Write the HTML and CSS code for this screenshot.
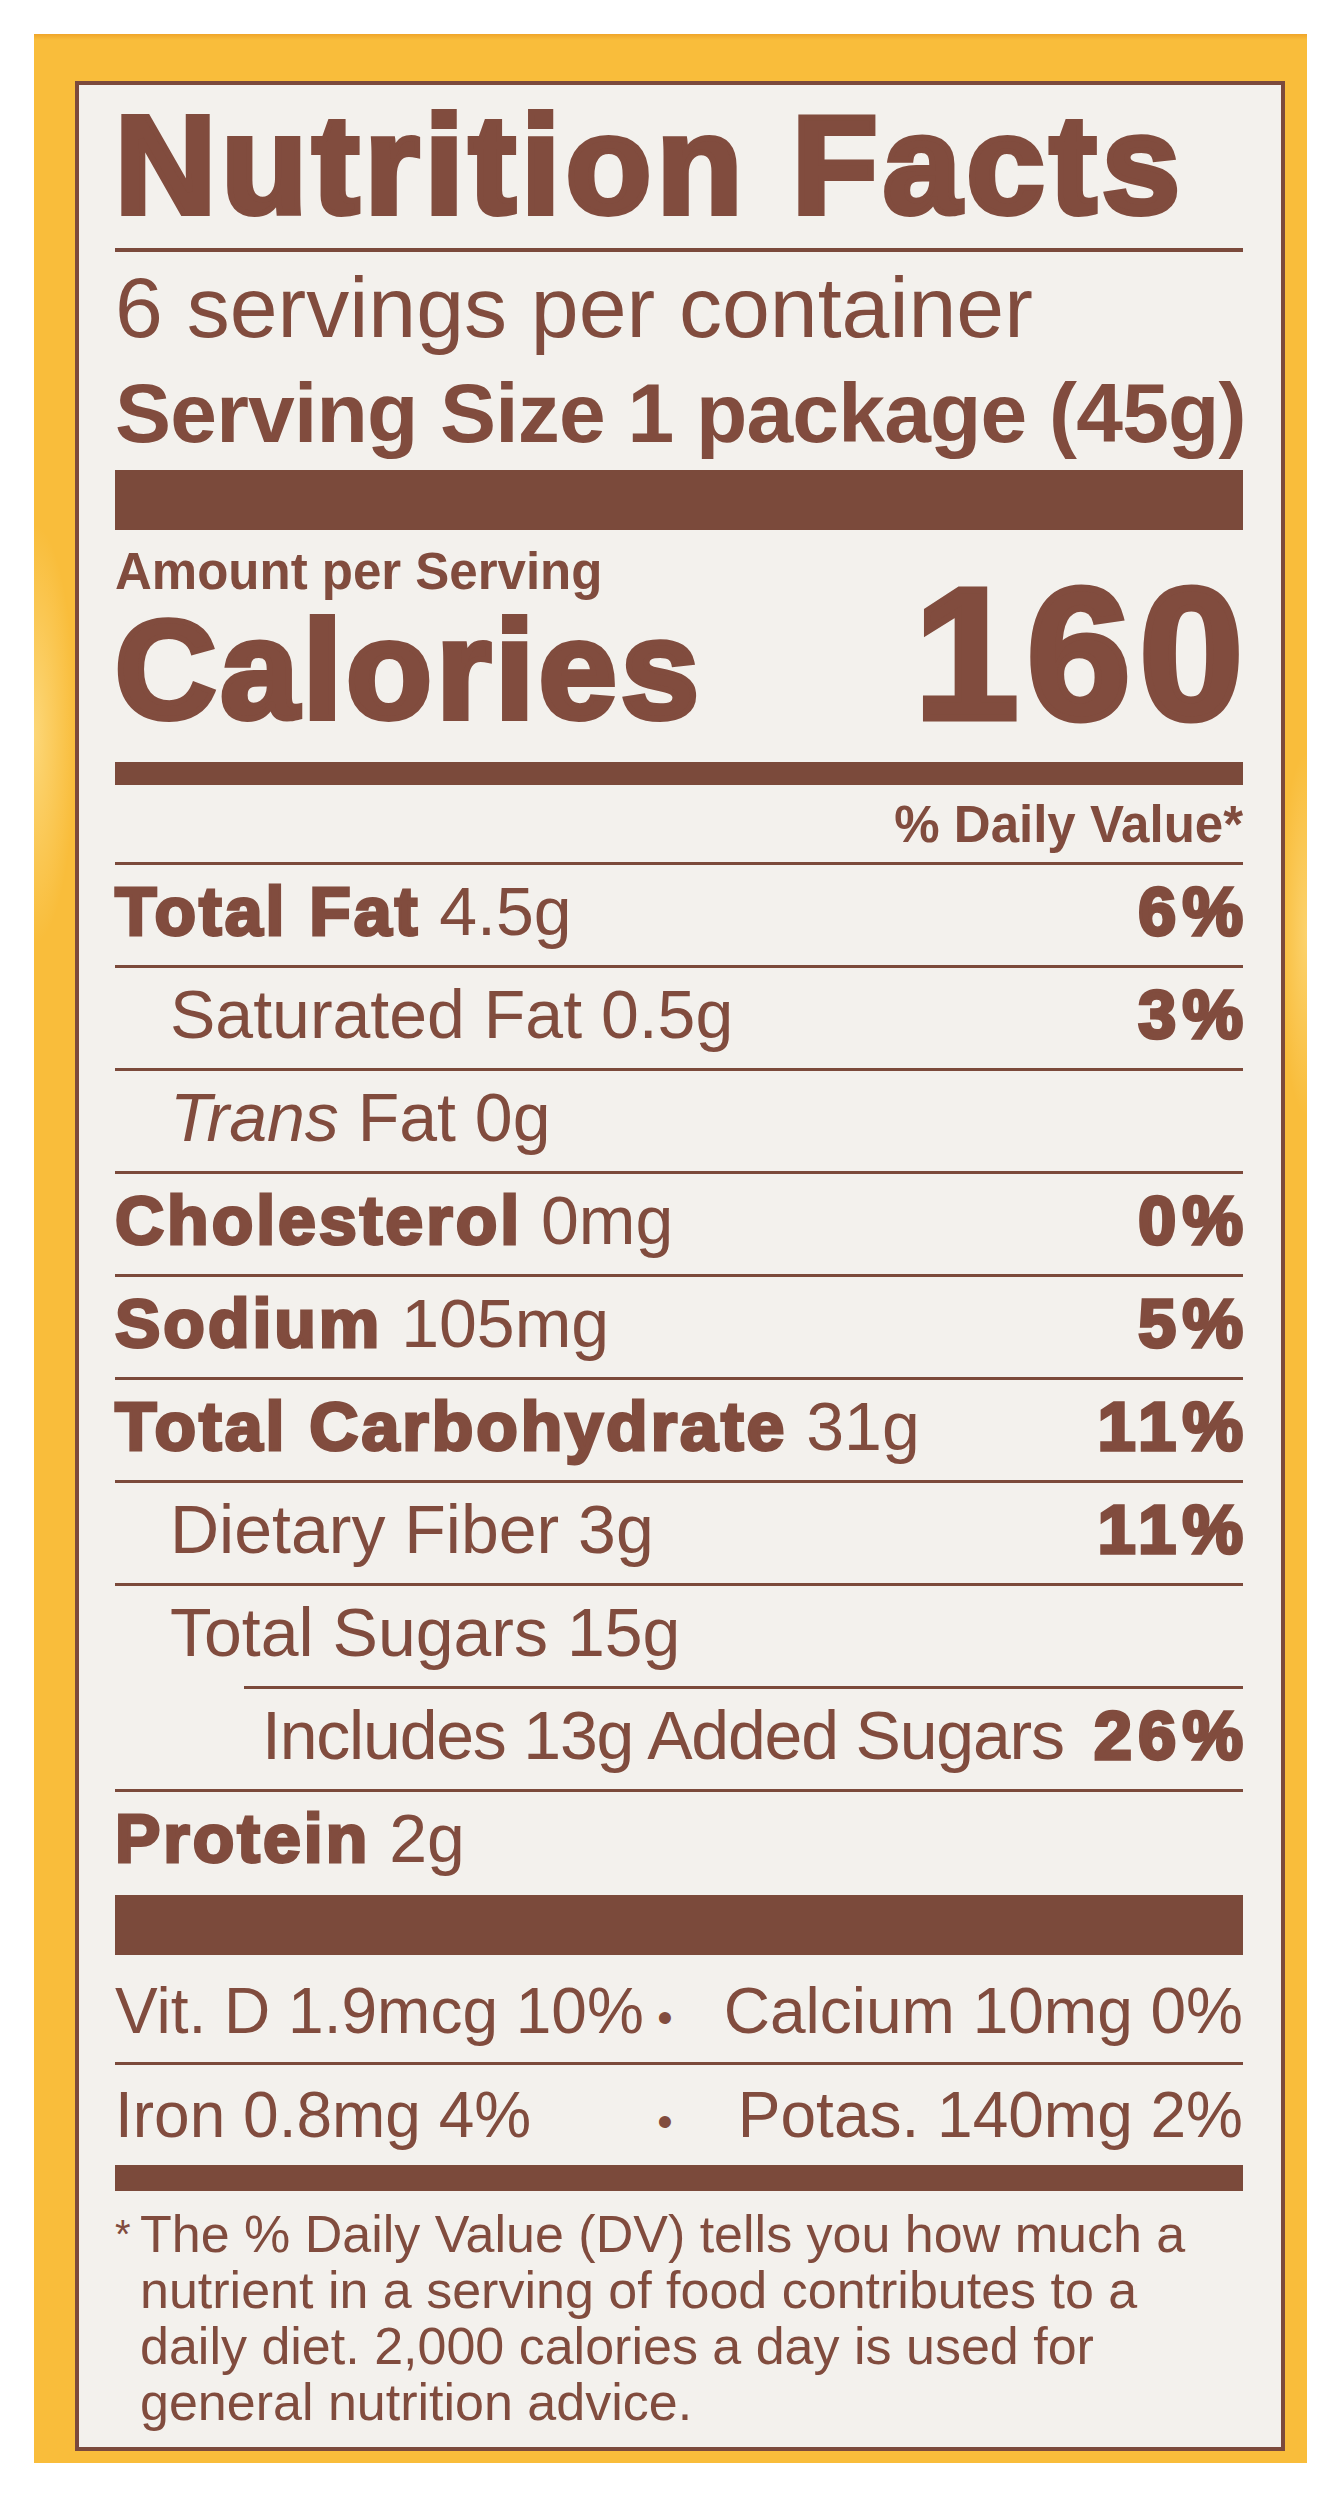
FILE: index.html
```html
<!DOCTYPE html>
<html lang="en">
<head>
<meta charset="utf-8">
<title>Nutrition Facts</title>
<link rel="stylesheet" href="styles.css">
</head>
<body>
<div class="box">
  <div class="label">
    <h1 class="title">Nutrition Facts</h1>
    <p class="servings">6 servings per container</p>
    <p class="size">Serving Size 1 package (45g)</p>
    <div class="bar bar-xl"></div>
    <div class="cal-row">
      <div class="cal-left">
        <div class="amount">Amount per Serving</div>
        <div class="calories">Calories</div>
      </div>
      <div class="cal-num">160</div>
    </div>
    <div class="bar bar-md"></div>
    <div class="dv-head">% Daily Value*</div>

    <div class="row"><span><b class="hv">Total Fat</b> 4.5g</span><b class="hv pct">6%</b></div>
    <div class="row sub"><span>Saturated Fat 0.5g</span><b class="hv pct">3%</b></div>
    <div class="row sub"><span><i>Trans</i> Fat 0g</span></div>
    <div class="row"><span><b class="hv">Cholesterol</b> 0mg</span><b class="hv pct">0%</b></div>
    <div class="row"><span><b class="hv">Sodium</b> 105mg</span><b class="hv pct">5%</b></div>
    <div class="row"><span><b class="hv">Total Carbohydrate</b> 31g</span><b class="hv pct">11%</b></div>
    <div class="row sub"><span>Dietary Fiber 3g</span><b class="hv pct">11%</b></div>
    <div class="row sub"><span>Total Sugars 15g</span></div>
    <div class="row sub2"><span class="tight">Includes 13g Added Sugars</span><b class="hv pct">26%</b></div>
    <div class="row"><span><b class="hv">Protein</b> 2g</span></div>

    <div class="bar bar-xl bar-after"></div>

    <div class="vit first">
      <span>Vit. D 1.9mcg 10%</span><span class="dot">•</span><span class="right">Calcium 10mg 0%</span>
    </div>
    <div class="vit second">
      <span>Iron 0.8mg 4%</span><span class="dot">•</span><span class="right">Potas. 140mg 2%</span>
    </div>

    <div class="bar bar-sm"></div>

    <div class="foot">
      <span class="ast">*</span>
      <p>The % Daily Value (DV) tells you how much a<br>nutrient in a serving of food contributes to a<br>daily diet. 2,000 calories a day is used for<br>general nutrition advice.</p>
    </div>
  </div>
</div>
</body>
</html>
```

FILE: styles.css
```css
* { box-sizing: border-box; }

html, body {
  margin: 0;
  padding: 0;
  background: #ffffff;
}

body {
  font-family: "Liberation Sans", Arial, Helvetica, sans-serif;
  color: #814c3e;
}

.box {
  margin: 34px 0 0 34px;
  width: 1273px;
  padding: 47px 22px 12px 41px;
  background: #f9bd3b;
  background-image:
    radial-gradient(ellipse 60px 300px at 0px 700px, rgba(255,236,170,0.55), rgba(255,236,170,0) 70%),
    radial-gradient(ellipse 40px 260px at 1273px 900px, rgba(255,236,170,0.45), rgba(255,236,170,0) 70%),
    linear-gradient(#f0a52a, #f9bd3b 6px);
}

.label {
  border: 4px solid #7b4a3c;
  background: #f3f1ed;
  padding: 0 38px 17px 36px;
}

.title {
  margin: 10px 0 0 0;
  padding-bottom: 13px;
  border-bottom: 4px solid #7b4a3c;
  font-size: 140px;
  line-height: 140px;
  font-weight: 700;
  letter-spacing: 5.5px;
  -webkit-text-stroke: 6px #814c3e;
  white-space: nowrap;
}

.servings {
  margin: 12px 0 0 0;
  font-size: 86px;
  line-height: 86px;
  white-space: nowrap;
}

.size {
  margin: 21px 0 0 0;
  font-size: 84px;
  line-height: 84px;
  font-weight: 700;
  letter-spacing: -0.8px;
  white-space: nowrap;
}

.bar {
  background: #7b4a3b;
}
.bar-xl { height: 60px; margin-top: 15px; }
.bar-md { height: 23px; margin-top: 22px; }
.bar-sm { height: 26px; margin-top: 0; }
.bar-after { margin-top: 3px; }

.cal-row {
  margin-top: 16px;
  display: flex;
  justify-content: space-between;
  align-items: flex-end;
}

.amount {
  font-size: 51px;
  line-height: 51px;
  font-weight: 700;
  white-space: nowrap;
}

.calories {
  margin-top: 3px;
  font-size: 140px;
  line-height: 140px;
  font-weight: 700;
  letter-spacing: 4.5px;
  -webkit-text-stroke: 6px #814c3e;
}

.cal-num {
  font-size: 186px;
  line-height: 186px;
  font-weight: 700;
  letter-spacing: 9px;
  margin-right: -9px;
  margin-bottom: -7px;
  -webkit-text-stroke: 7px #814c3e;
}

.dv-head {
  margin-top: 14px;
  text-align: right;
  font-size: 51px;
  line-height: 51px;
  font-weight: 700;
  margin-bottom: 12px;
}

.row {
  height: 103px;
  border-top: 3px solid #7b4a3b;
  padding-top: 12px;
  display: flex;
  justify-content: space-between;
  align-items: baseline;
  font-size: 68px;
  line-height: 68px;
  white-space: nowrap;
}

.row.sub { padding-left: 55px; }
.row.sub2 { margin-left: 129px; padding-left: 18px; }

.tight { letter-spacing: -1.2px; }

.hv {
  font-weight: 700;
  letter-spacing: 3px;
  -webkit-text-stroke: 3px #814c3e;
}

.pct {
  letter-spacing: 6.5px;
  margin-right: -6.5px;
  -webkit-text-stroke: 3.5px #814c3e;
}

.vit {
  display: grid;
  grid-template-columns: 530px 40px 1fr;
  align-items: baseline;
  font-size: 64px;
  line-height: 64px;
  white-space: nowrap;
}
.vit.first { padding: 24px 0 19px 0; }
.vit.second { border-top: 3px solid #7b4a3b; padding: 18px 0 18px 0; }

.dot {
  text-align: center;
  font-size: 44px;
  line-height: 44px;
}

.right { text-align: right; }

.foot {
  margin-top: 15px;
  display: flex;
  align-items: flex-start;
}

.ast {
  width: 25px;
  font-size: 40px;
  line-height: 56px;
}

.foot p {
  margin: 0;
  font-size: 52px;
  line-height: 56px;
  white-space: nowrap;
}
```
